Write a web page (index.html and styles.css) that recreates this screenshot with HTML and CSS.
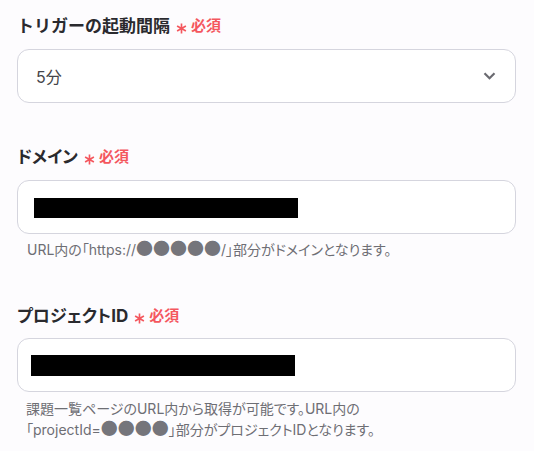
FILE: index.html
```html
<!DOCTYPE html>
<html lang="ja">
<head>
    <meta charset="UTF-8">
    <meta name="viewport" content="width=device-width, initial-scale=1.0">
    <title>Trigger settings</title>
    <link rel="stylesheet" href="styles.css">
</head>
<body>
    <form class="settings-form">
        <div class="form-group group-interval">
            <label class="field-label label-wide">トリガーの起動間隔<span class="required"><svg class="asterisk" viewBox="0 0 12 12"><path d="M6 0.5V11.5M1.2 3.25L10.8 8.75M1.2 8.75L10.8 3.25"/></svg>必須</span></label>
            <div class="field-box select-box">
                <span class="select-value">5分</span>
                <svg class="chevron" viewBox="0 0 12 8"><path d="M1 1.2L6 6.2L11 1.2"/></svg>
            </div>
        </div>

        <div class="form-group group-domain">
            <label class="field-label">ドメイン<span class="required"><svg class="asterisk" viewBox="0 0 12 12"><path d="M6 0.5V11.5M1.2 3.25L10.8 8.75M1.2 8.75L10.8 3.25"/></svg>必須</span></label>
            <div class="field-box input-box domain-box">
                <span class="redacted"></span>
            </div>
            <p class="help-text">URL内の「https://<span class="mask">●●●●●</span>/」部分がドメインとなります。</p>
        </div>

        <div class="form-group group-project">
            <label class="field-label">プロジェクトID<span class="required"><svg class="asterisk" viewBox="0 0 12 12"><path d="M6 0.5V11.5M1.2 3.25L10.8 8.75M1.2 8.75L10.8 3.25"/></svg>必須</span></label>
            <div class="field-box input-box project-box">
                <span class="redacted"></span>
            </div>
            <p class="help-text">課題一覧ページのURL内から取得が可能です。URL内の<br>「projectId=<span class="mask">●●●●</span>」部分がプロジェクトIDとなります。</p>
        </div>
    </form>
</body>
</html>
```

FILE: styles.css
```css
:root {
    --page-bg: #fdfcfe;
    --box-bg: #ffffff;
    --border-color: #d5d5de;
    --text-primary: #2a2a2e;
    --text-value: #45454a;
    --text-help: #6e6e74;
    --required-color: #f4575e;
}

body {
    margin: 0;
    padding: 0;
    background-color: var(--page-bg);
    color: var(--text-primary);
    font-family: 'Inter', 'Noto Sans CJK JP', sans-serif;
    font-feature-settings: "palt";
}

.settings-form {
    padding: 14px 18px 0 17px;
}

.form-group {
    display: flex;
    flex-direction: column;
}

.group-interval {
    margin-bottom: 42px;
}

.group-domain {
    margin-bottom: 44px;
}

.field-label {
    display: flex;
    align-items: center;
    height: 24px;
    font-size: 17px;
    font-weight: 700;
    line-height: 24px;
    margin-bottom: 11px;
}

.label-wide {
    font-feature-settings: normal;
}

.group-project .field-label {
    margin-bottom: 10px;
}

.required {
    display: inline-flex;
    align-items: center;
    margin-left: 6px;
    color: var(--required-color);
    font-size: 15px;
    font-weight: 700;
    font-feature-settings: "palt";
}

.asterisk {
    width: 11px;
    height: 11px;
    margin: 4px 4px 0 0;
    fill: none;
    stroke: var(--required-color);
    stroke-width: 1.8;
}

.field-box {
    box-sizing: border-box;
    height: 54px;
    background: var(--box-bg);
    border: 1px solid var(--border-color);
    border-radius: 12px;
    display: flex;
    align-items: center;
}

.select-box {
    justify-content: space-between;
    padding: 0 19px 0 18px;
}

.select-value {
    font-size: 16px;
    color: var(--text-value);
}

.chevron {
    width: 13px;
    height: 8px;
    fill: none;
    stroke: #6a6a70;
    stroke-width: 2.2;
}

.domain-box {
    padding: 2px 0 0 16px;
}

.project-box {
    padding: 1px 0 0 13px;
}

.redacted {
    display: block;
    width: 264px;
    height: 20px;
    background: #000000;
}

.project-box .redacted {
    height: 21px;
}

.help-text {
    margin: 5px 0 0 10px;
    font-size: 14px;
    line-height: 20px;
    color: var(--text-help);
}

.mask {
    font-family: 'Noto Sans CJK JP', sans-serif;
    font-size: 17px;
    line-height: 1;
    font-feature-settings: normal;
    color: #75757b;
}

.group-project .help-text {
    margin-top: 7px;
    margin-left: 9px;
}
```
